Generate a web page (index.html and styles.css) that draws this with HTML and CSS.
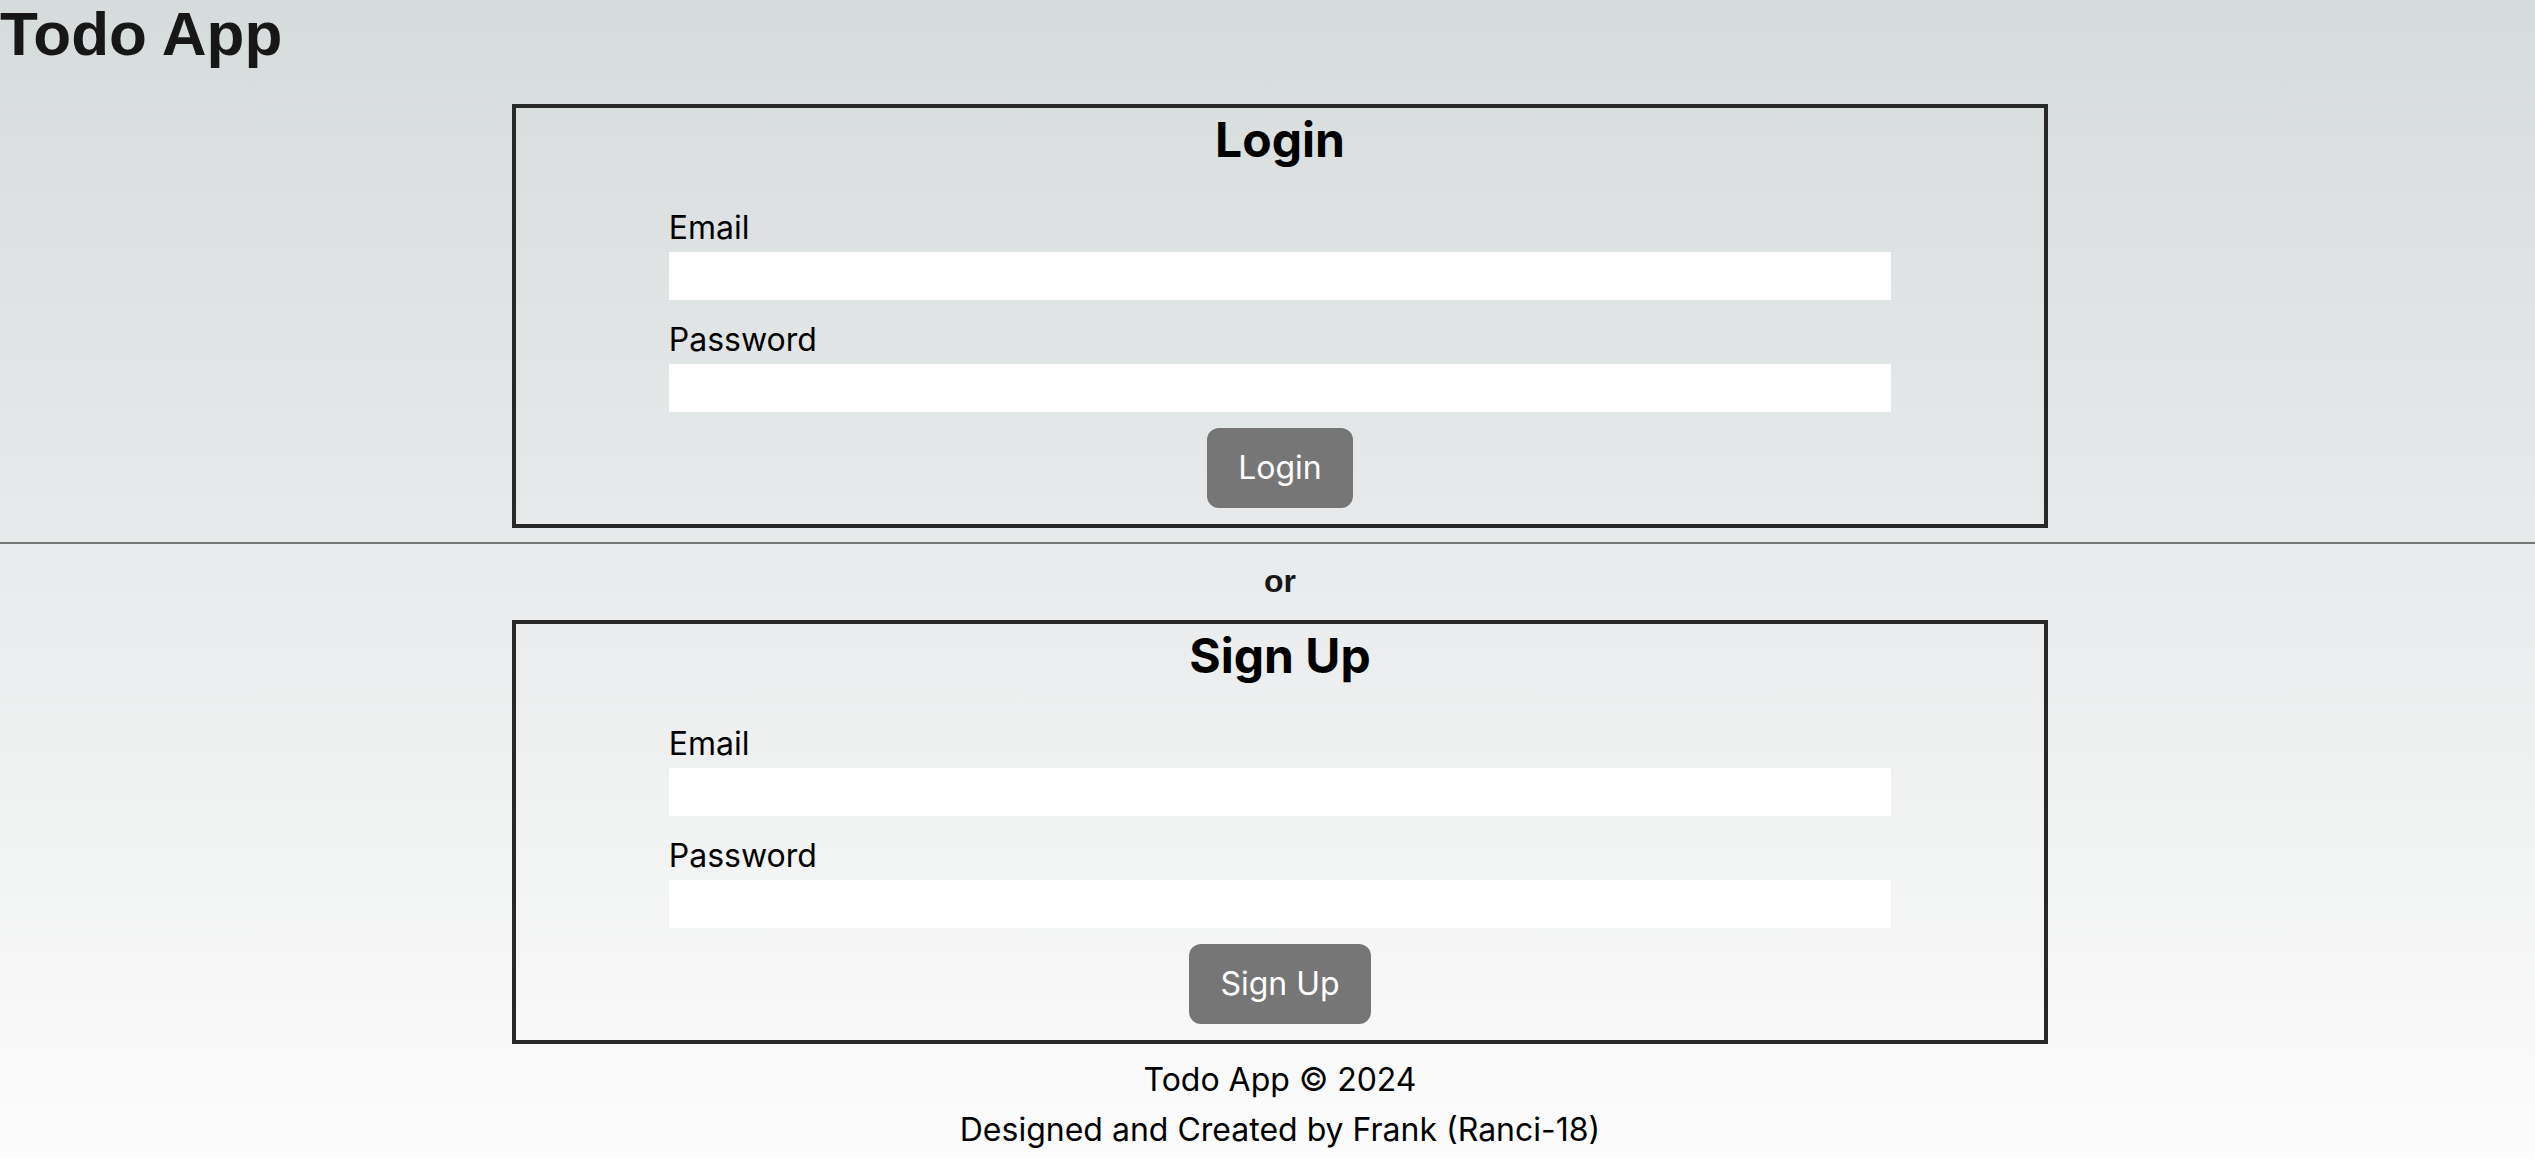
FILE: index.html
```html
<!DOCTYPE html>
<html lang="en">
<head>
<meta charset="utf-8">
<title>Todo App</title>
<link rel="stylesheet" href="styles.css">
</head>
<body>
  <h1 class="app-title">Todo App</h1>

  <div class="column">
    <section class="auth-box auth-box--first">
      <h2 class="auth-heading">Login</h2>
      <form class="auth-form">
        <label class="field-label" for="login-email">Email</label>
        <input class="field-input" id="login-email" type="email">
        <label class="field-label field-label--spaced" for="login-password">Password</label>
        <input class="field-input" id="login-password" type="password">
        <button class="auth-button" type="button">Login</button>
      </form>
    </section>
  </div>

  <div class="divider"></div>

  <div class="column">
    <p class="or-text">or</p>
    <section class="auth-box">
      <h2 class="auth-heading">Sign Up</h2>
      <form class="auth-form">
        <label class="field-label" for="signup-email">Email</label>
        <input class="field-input" id="signup-email" type="email">
        <label class="field-label field-label--spaced" for="signup-password">Password</label>
        <input class="field-input" id="signup-password" type="password">
        <button class="auth-button" type="button">Sign Up</button>
      </form>
    </section>
    <footer class="site-footer">
      <p class="footer-line">Todo App © 2024</p>
      <p class="footer-line">Designed and Created by Frank (Ranci-18)</p>
    </footer>
  </div>
</body>
</html>
```

FILE: styles.css
```css
* {
  box-sizing: border-box;
}

html, body {
  margin: 0;
  padding: 0;
}

body {
  min-height: 100vh;
  background: linear-gradient(to bottom, #d6dbdc 0%, #e9ebec 50%, #fcfcfc 100%);
  font-family: Inter, "Noto Sans", sans-serif;
  color: #000;
  overflow-x: hidden;
}

.app-title {
  margin: 0;
  font-family: "Liberation Sans", Arial, sans-serif;
  font-weight: 700;
  font-size: 62px;
  line-height: 67px;
  color: #171717;
}

.column {
  width: 1536px;
  margin-left: 512px;
}

.auth-box {
  border: 4px solid #282828;
  padding: 3px 0 16px;
}

.auth-box--first {
  margin-top: 37px;
}

.auth-heading {
  margin: 0;
  text-align: center;
  font-family: Inter, sans-serif;
  font-weight: 700;
  font-size: 48px;
  line-height: 58px;
  color: #000;
}

.auth-form {
  width: 80%;
  margin: 39px auto 0;
  display: flex;
  flex-direction: column;
  align-items: stretch;
}

.field-label {
  display: block;
  font-size: 32px;
  line-height: 39px;
  margin-bottom: 5px;
  color: #000;
}

.field-label--spaced {
  margin-top: 20px;
}

.field-input {
  display: block;
  width: 100%;
  height: 48px;
  border: none;
  background: #fff;
  margin: 0;
  padding: 0 8px;
  font-family: Inter, sans-serif;
  font-size: 24px;
}

.auth-button {
  align-self: center;
  margin-top: 16px;
  padding: 20px 31px;
  border: none;
  border-radius: 12px;
  background: #767676;
  color: #fff;
  font-family: Inter, sans-serif;
  font-size: 32px;
  line-height: 40px;
}

.divider {
  margin-top: 14px;
  height: 2px;
  background: #777;
}

.or-text {
  margin: 0;
  padding: 19px 0 20px;
  text-align: center;
  font-family: "Liberation Sans", Arial, sans-serif;
  font-weight: 700;
  font-size: 32px;
  line-height: 37px;
  color: #171717;
}

.site-footer {
  padding-top: 11px;
  text-align: center;
}

.footer-line {
  margin: 0;
  font-size: 32px;
  line-height: 50px;
  color: #000;
}
```
